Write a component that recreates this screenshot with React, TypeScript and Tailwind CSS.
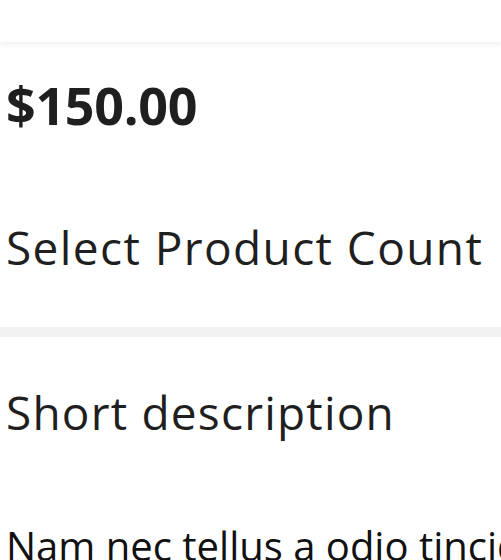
import React from 'react';

const font = { fontFamily: '"Open Sans", "Noto Sans", sans-serif' };

const App: React.FC = () => {
  return (
    <div className="min-h-[560px] w-[501px] overflow-hidden bg-white text-[#1f1f1f]" style={font}>
      {/* Top bar */}
      <div className="relative z-10 h-[42px] bg-white shadow-[0_2px_6px_rgba(0,0,0,0.07)]"></div>

      {/* Price + count */}
      <div className="px-[6px] pt-[37px] pb-[57px]">
        <div className="text-[52px] font-bold leading-none tracking-[-0.3px]">$150.00</div>
        <h3 className="mt-[93px] text-[46px] font-normal leading-none tracking-[1.4px]">
          Select Product Count
        </h3>
      </div>

      <div className="h-[10px] bg-[#f2f2f2]"></div>

      {/* Description */}
      <div className="px-[6px] pt-[52px]">
        <h3 className="text-[46px] font-normal leading-none tracking-[1.2px]">Short description</h3>
        <p className="mt-[91px] whitespace-nowrap text-[40px] leading-none text-[#111]">
          Nam nec tellus a odio tincidunt auctor a ornare odio.
        </p>
      </div>
    </div>
  );
};

export default App;
